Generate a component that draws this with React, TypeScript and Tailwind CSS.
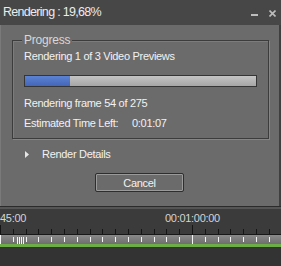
import React from "react"

const progress = 19.68
const majorX = [0, 192]
const minorX = Array.from({ length: 22 }, (_, i) => Math.round(i * 12.8)).filter((x) => !majorX.includes(x))
const cluster = [17, 19, 21, 23]

function Ruler() {
  return (
    <div className="flex flex-col">
      {/* labels */}
      <div className="h-[16px] flex pt-[2px] text-[11px] leading-[14px] tracking-[-0.3px] text-[#d4d4d4] bg-[#3b3b3b]">
        <span>45:00</span>
        <span className="ml-[139px]">00:01:00:00</span>
      </div>
      {/* dark ticks */}
      <svg width="281" height="9" className="block bg-[#3b3b3b]">
        {minorX.map((x) => (
          <rect key={x} x={x} y={4} width={1} height={5} fill="#151515" />
        ))}
        {majorX.map((x) => (
          <rect key={x} x={x} y={0} width={1} height={9} fill="#151515" />
        ))}
      </svg>
      <div className="h-[1px] bg-[#181818]" />
      {/* light band */}
      <svg width="281" height="9" className="block bg-gradient-to-b from-[#8a8a8a] to-[#6e6e6e]">
        {minorX.map((x) => (
          <rect key={x} x={x} y={2} width={1} height={5} fill="#f4f4f4" />
        ))}
        {cluster.map((x) => (
          <rect key={x} x={x} y={2} width={1} height={7} fill="#f4f4f4" />
        ))}
        {majorX.map((x) => (
          <rect key={x} x={x} y={0} width={1} height={9} fill="#f4f4f4" />
        ))}
      </svg>
      <div className="h-[3px] bg-[#6cad47]" />
    </div>
  )
}

export default function App() {
  return (
    <div className="w-[281px] h-[266px] overflow-hidden bg-[#333333] font-['Liberation_Sans',Arial,sans-serif] text-[#f2f2f2]">
      {/* Title bar */}
      <div className="h-[25px] bg-[#474747] flex items-center justify-between pr-[5px]">
        <span className="pl-[3px] text-[12.5px] tracking-[-0.7px] text-[#ececec]">Rendering : 19,68%</span>
        <div className="flex items-center gap-[11px] mt-[1px]">
          <svg width="7" height="9" viewBox="0 0 7 9">
            <rect x="0" y="5" width="7" height="2" fill="#bdbdbd" />
          </svg>
          <svg width="7" height="7" viewBox="0 0 7 7">
            <path d="M0.5 0.5 L6.5 6.5 M6.5 0.5 L0.5 6.5" stroke="#bdbdbd" strokeWidth="1.6" />
          </svg>
        </div>
      </div>

      {/* Dialog body */}
      <div className="h-[181px] bg-[#6b6b6b] border-r-[2px] border-[#3f3f3f] shadow-[inset_1px_0_0_#7a7a7a] pt-[15px] flex flex-col text-[11px] leading-[14px] tracking-[-0.3px]">
        <div className="relative ml-[12px] w-[257px] h-[99px] border border-[#3c3c3c] shadow-[1px_1px_0_#858585,inset_1px_1px_0_#7c7c7c] pl-[11px] pt-[8px]">
          <span className="absolute left-[9px] top-[-8px] px-[2px] bg-[#6b6b6b] text-[12px] text-[#d8d8d8] tracking-[-0.2px]">Progress</span>
          <div>Rendering 1 of 3 Video Previews</div>
          <div className="mt-[12px] w-[233px] h-[12px] border border-[#353535] bg-gradient-to-b from-[#c4c4c4] to-[#a6a6a6] flex">
            <div className="h-full bg-gradient-to-b from-[#5b82d4] to-[#4566b8]" style={{ width: `${progress}%` }} />
          </div>
          <div className="mt-[9px]">Rendering frame 54 of 275</div>
          <div className="mt-[6px] flex">
            <span className="w-[108px]">Estimated Time Left:</span>
            <span>0:01:07</span>
          </div>
        </div>

        <div className="mt-[8px] ml-[25px] flex items-center h-[14px]">
          <svg width="4" height="7" viewBox="0 0 4 7" className="mt-[1px]">
            <path d="M0 0 L4 3.5 L0 7 Z" fill="#e6e6e6" />
          </svg>
          <span className="ml-[13px]">Render Details</span>
        </div>

        <button className="mt-[12px] mx-auto w-[89px] h-[19px] rounded-[2px] border border-[#2e2e2e] shadow-[inset_0_0_0_1px_#9a9a9a] bg-[#6b6b6b] text-[11px] leading-[14px] text-[#f2f2f2] flex items-center justify-center">
          Cancel
        </button>
      </div>

      {/* Timeline */}
      <div className="h-[1px] bg-[#2b2b2b]" />
      <div className="h-[2px] bg-[#555555]" />
      <Ruler />
    </div>
  )
}
